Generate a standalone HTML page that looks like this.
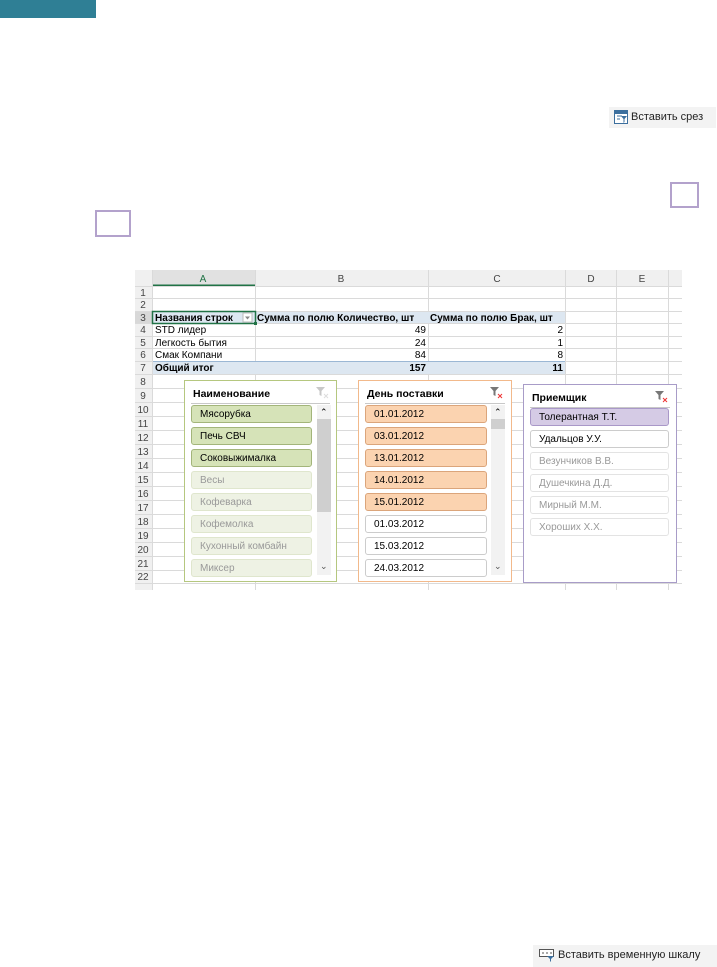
<!DOCTYPE html>
<html><head><meta charset="utf-8"><style>
body{margin:0;width:717px;height:967px;background:#fff;position:relative;overflow:hidden;font-family:"Liberation Sans",Arial,sans-serif}
.a{position:absolute}
.sq{position:absolute;border:2px solid #b3a2cc;box-sizing:border-box}
.item{position:absolute;height:18px;box-sizing:border-box;border-radius:3px;font-size:10px;line-height:17px;padding-left:8px;white-space:nowrap}
.sl{position:absolute;box-sizing:border-box;background:#fff}
.stitle{position:absolute;left:8px;top:7px;font-size:10.5px;font-weight:bold}
.sline{position:absolute;left:6px;right:6px;top:22px;height:1px;background:#c8c8c8}
.btn{position:absolute;font-size:11px;color:#222;white-space:nowrap;font-family:"Liberation Sans",sans-serif}
</style></head><body>
<div class="a" style="left:0;top:0;width:96px;height:18px;background:#2f7f95"></div>

<div class="a" style="left:609px;top:107px;width:107px;height:21px;background:#f3f3f3"></div>
<svg class="a" style="left:614px;top:110px" width="14" height="14" viewBox="0 0 14 14"><rect x="0.5" y="0.5" width="13" height="13" fill="#fff" stroke="#3c6f9e"/><rect x="1" y="1" width="12" height="3" fill="#3c6f9e"/><path d="M3 6h5M3 9h3" stroke="#3c6f9e"/><path d="M7 6h6l-2.5 3v3l-1 1v-4z" fill="#3c6f9e"/></svg>
<div class="btn" style="left:631px;top:111px">Вставить срез</div>

<div class="sq" style="left:670px;top:182px;width:29px;height:26px"></div>
<div class="sq" style="left:95px;top:210px;width:36px;height:27px"></div>

<div class="a" style="left:533px;top:945px;width:184px;height:22px;background:#f3f3f3"></div>
<svg class="a" style="left:539px;top:948px" width="16" height="14" viewBox="0 0 16 14"><rect x="0.5" y="1.5" width="14" height="7" fill="#fff" stroke="#555"/><path d="M3 5h2M7 5h2M11 5h2" stroke="#555"/><path d="M8 8h7l-3 3v3l-1-1v-2z" fill="#3c6f9e"/></svg>
<div class="btn" style="left:558px;top:949px">Вставить временную шкалу</div>

<svg class="a" style="left:135px;top:270px" width="547" height="320" viewBox="0 0 547 320">
<rect x="0" y="0" width="547" height="16" fill="#f0f0f0"/>
<rect x="17" y="0" width="103" height="16" fill="#e1e1e1"/>
<rect x="0" y="16" width="17" height="304" fill="#f0f0f0"/>
<rect x="0" y="41" width="17" height="12" fill="#d8d8d8"/>
<path d="M17 15.5H120" stroke="#217346" stroke-width="2"/>
<g stroke="#dadada" stroke-width="1">
<path d="M17.5 0V320M120.5 0V320M293.5 0V320M430.5 0V320M481.5 0V320M533.5 0V320"/>
<path d="M0 16.5H547M0 28.5H547M0 41.5H547M0 53.5H547M0 66.5H547M0 78.5H547M0 91.5H547M0 104.5H547
M0 118.5H547M0 132.5H547M0 146.5H547M0 160.5H547M0 174.5H547M0 188.5H547M0 202.5H547M0 216.5H547M0 230.5H547M0 244.5H547M0 258.5H547M0 272.5H547M0 286.5H547M0 300.5H547M0 313.5H547"/>
</g>
<rect x="18" y="42" width="412" height="11" fill="#dde7f1"/>
<rect x="18" y="92" width="412" height="12" fill="#dde7f1"/>
<path d="M18 91.5H430" stroke="#9bb7d4"/>
<rect x="17.5" y="41.5" width="103" height="12" fill="none" stroke="#217346" stroke-width="1.5"/>
<rect x="119" y="52" width="3" height="3" fill="#217346"/>
<rect x="108" y="43" width="9" height="9" fill="#fff" stroke="#bbb"/>
<path d="M110 46.5h5l-2.5 3z" fill="#888"/>
<g font-family="Liberation Sans" font-size="10" fill="#444" text-anchor="middle">
<text x="68" y="12" fill="#217346">A</text><text x="206" y="12">B</text><text x="362" y="12">C</text><text x="456" y="12">D</text><text x="507" y="12">E</text>
<text x="8" y="26">1</text><text x="8" y="38">2</text><text x="8" y="51">3</text><text x="8" y="63">4</text><text x="8" y="76">5</text><text x="8" y="88">6</text><text x="8" y="101">7</text>
<text x="8" y="115">8</text><text x="8" y="129">9</text><text x="8" y="143">10</text><text x="8" y="157">11</text><text x="8" y="171">12</text><text x="8" y="185">13</text><text x="8" y="199">14</text><text x="8" y="213">15</text><text x="8" y="227">16</text><text x="8" y="241">17</text><text x="8" y="255">18</text><text x="8" y="269">19</text><text x="8" y="283">20</text><text x="8" y="297">21</text><text x="8" y="310">22</text>
</g>
<g font-family="Liberation Sans" font-size="10" fill="#000">
<text x="20" y="51" font-weight="bold">Названия строк</text>
<text x="122" y="51" font-weight="bold">Сумма по полю Количество, шт</text>
<text x="295" y="51" font-weight="bold">Сумма по полю Брак, шт</text>
<text x="20" y="63">STD лидер</text><text x="20" y="76">Легкость бытия</text><text x="20" y="88">Смак Компани</text>
<text x="20" y="101" font-weight="bold">Общий итог</text>
<g text-anchor="end"><text x="291" y="63">49</text><text x="291" y="76">24</text><text x="291" y="88">84</text><text x="291" y="101" font-weight="bold">157</text>
<text x="428" y="63">2</text><text x="428" y="76">1</text><text x="428" y="88">8</text><text x="428" y="101" font-weight="bold">11</text></g>
</g>
</svg>

<div class="sl" style="left:184px;top:380px;width:153px;height:202px;border:1px solid #b5c77f">
<div class="stitle">Наименование</div><div class="sline"></div>
<svg class="a" style="left:130px;top:4px" width="14" height="14"><path d="M1 2h9l-3.5 4v5l-2-1V6z" fill="#c8c8c8"/><path d="M9 9l4 4M13 9l-4 4" stroke="#ddd"/></svg>
<div class="a" style="left:132px;top:24px;width:14px;height:170px;background:#f2f2f2"></div>
<div class="a" style="left:132px;top:38px;width:14px;height:93px;background:#cfcfcf"></div>
<div class="a" style="left:135px;top:26px;font-size:9px">&#8963;</div>
<div class="a" style="left:135px;top:180px;font-size:9px;color:#555">&#8964;</div>
</div>
<div class="sl" style="left:358px;top:380px;width:154px;height:202px;border:1px solid #f2b98b">
<div class="stitle">День поставки</div><div class="sline"></div>
<svg class="a" style="left:130px;top:4px" width="14" height="14"><path d="M1 2h9l-3.5 4v5l-2-1V6z" fill="#777"/><path d="M9 9l4 4M13 9l-4 4" stroke="#e33"/></svg>
<div class="a" style="left:132px;top:24px;width:14px;height:170px;background:#f2f2f2"></div>
<div class="a" style="left:132px;top:38px;width:14px;height:10px;background:#cfcfcf"></div>
<div class="a" style="left:135px;top:26px;font-size:9px">&#8963;</div>
<div class="a" style="left:135px;top:180px;font-size:9px;color:#555">&#8964;</div>
</div>
<div class="sl" style="left:523px;top:384px;width:154px;height:199px;border:1px solid #a89cc8">
<div class="stitle">Приемщик</div><div class="sline"></div>
<svg class="a" style="left:130px;top:4px" width="14" height="14"><path d="M1 2h9l-3.5 4v5l-2-1V6z" fill="#777"/><path d="M9 9l4 4M13 9l-4 4" stroke="#e33"/></svg>
</div>

<div class="item" style="left:191px;top:405px;width:121px;background:#d6e3b8;border:1px solid #a3b57a">Мясорубка</div>
<div class="item" style="left:191px;top:427px;width:121px;background:#d6e3b8;border:1px solid #a3b57a">Печь СВЧ</div>
<div class="item" style="left:191px;top:449px;width:121px;background:#d6e3b8;border:1px solid #a3b57a">Соковыжималка</div>
<div class="item" style="left:191px;top:471px;width:121px;background:#eef2e4;border:1px solid #dfe6cd;color:#999">Весы</div>
<div class="item" style="left:191px;top:493px;width:121px;background:#eef2e4;border:1px solid #dfe6cd;color:#999">Кофеварка</div>
<div class="item" style="left:191px;top:515px;width:121px;background:#eef2e4;border:1px solid #dfe6cd;color:#999">Кофемолка</div>
<div class="item" style="left:191px;top:537px;width:121px;background:#eef2e4;border:1px solid #dfe6cd;color:#999">Кухонный комбайн</div>
<div class="item" style="left:191px;top:559px;width:121px;background:#eef2e4;border:1px solid #dfe6cd;color:#999">Миксер</div>

<div class="item" style="left:365px;top:405px;width:122px;background:#fbd3b0;border:1px solid #dba57b">01.01.2012</div>
<div class="item" style="left:365px;top:427px;width:122px;background:#fbd3b0;border:1px solid #dba57b">03.01.2012</div>
<div class="item" style="left:365px;top:449px;width:122px;background:#fbd3b0;border:1px solid #dba57b">13.01.2012</div>
<div class="item" style="left:365px;top:471px;width:122px;background:#fbd3b0;border:1px solid #dba57b">14.01.2012</div>
<div class="item" style="left:365px;top:493px;width:122px;background:#fbd3b0;border:1px solid #dba57b">15.01.2012</div>
<div class="item" style="left:365px;top:515px;width:122px;background:#fff;border:1px solid #ccc">01.03.2012</div>
<div class="item" style="left:365px;top:537px;width:122px;background:#fff;border:1px solid #ccc">15.03.2012</div>
<div class="item" style="left:365px;top:559px;width:122px;background:#fff;border:1px solid #ccc">24.03.2012</div>

<div class="item" style="left:530px;top:408px;width:139px;background:#d5cbe5;border:1px solid #a998c8">Толерантная Т.Т.</div>
<div class="item" style="left:530px;top:430px;width:139px;background:#fff;border:1px solid #ccc">Удальцов У.У.</div>
<div class="item" style="left:530px;top:452px;width:139px;background:#fff;border:1px solid #e3e3e3;color:#999">Везунчиков В.В.</div>
<div class="item" style="left:530px;top:474px;width:139px;background:#fff;border:1px solid #e3e3e3;color:#999">Душечкина Д.Д.</div>
<div class="item" style="left:530px;top:496px;width:139px;background:#fff;border:1px solid #e3e3e3;color:#999">Мирный М.М.</div>
<div class="item" style="left:530px;top:518px;width:139px;background:#fff;border:1px solid #e3e3e3;color:#999">Хороших Х.Х.</div>
</body></html>
